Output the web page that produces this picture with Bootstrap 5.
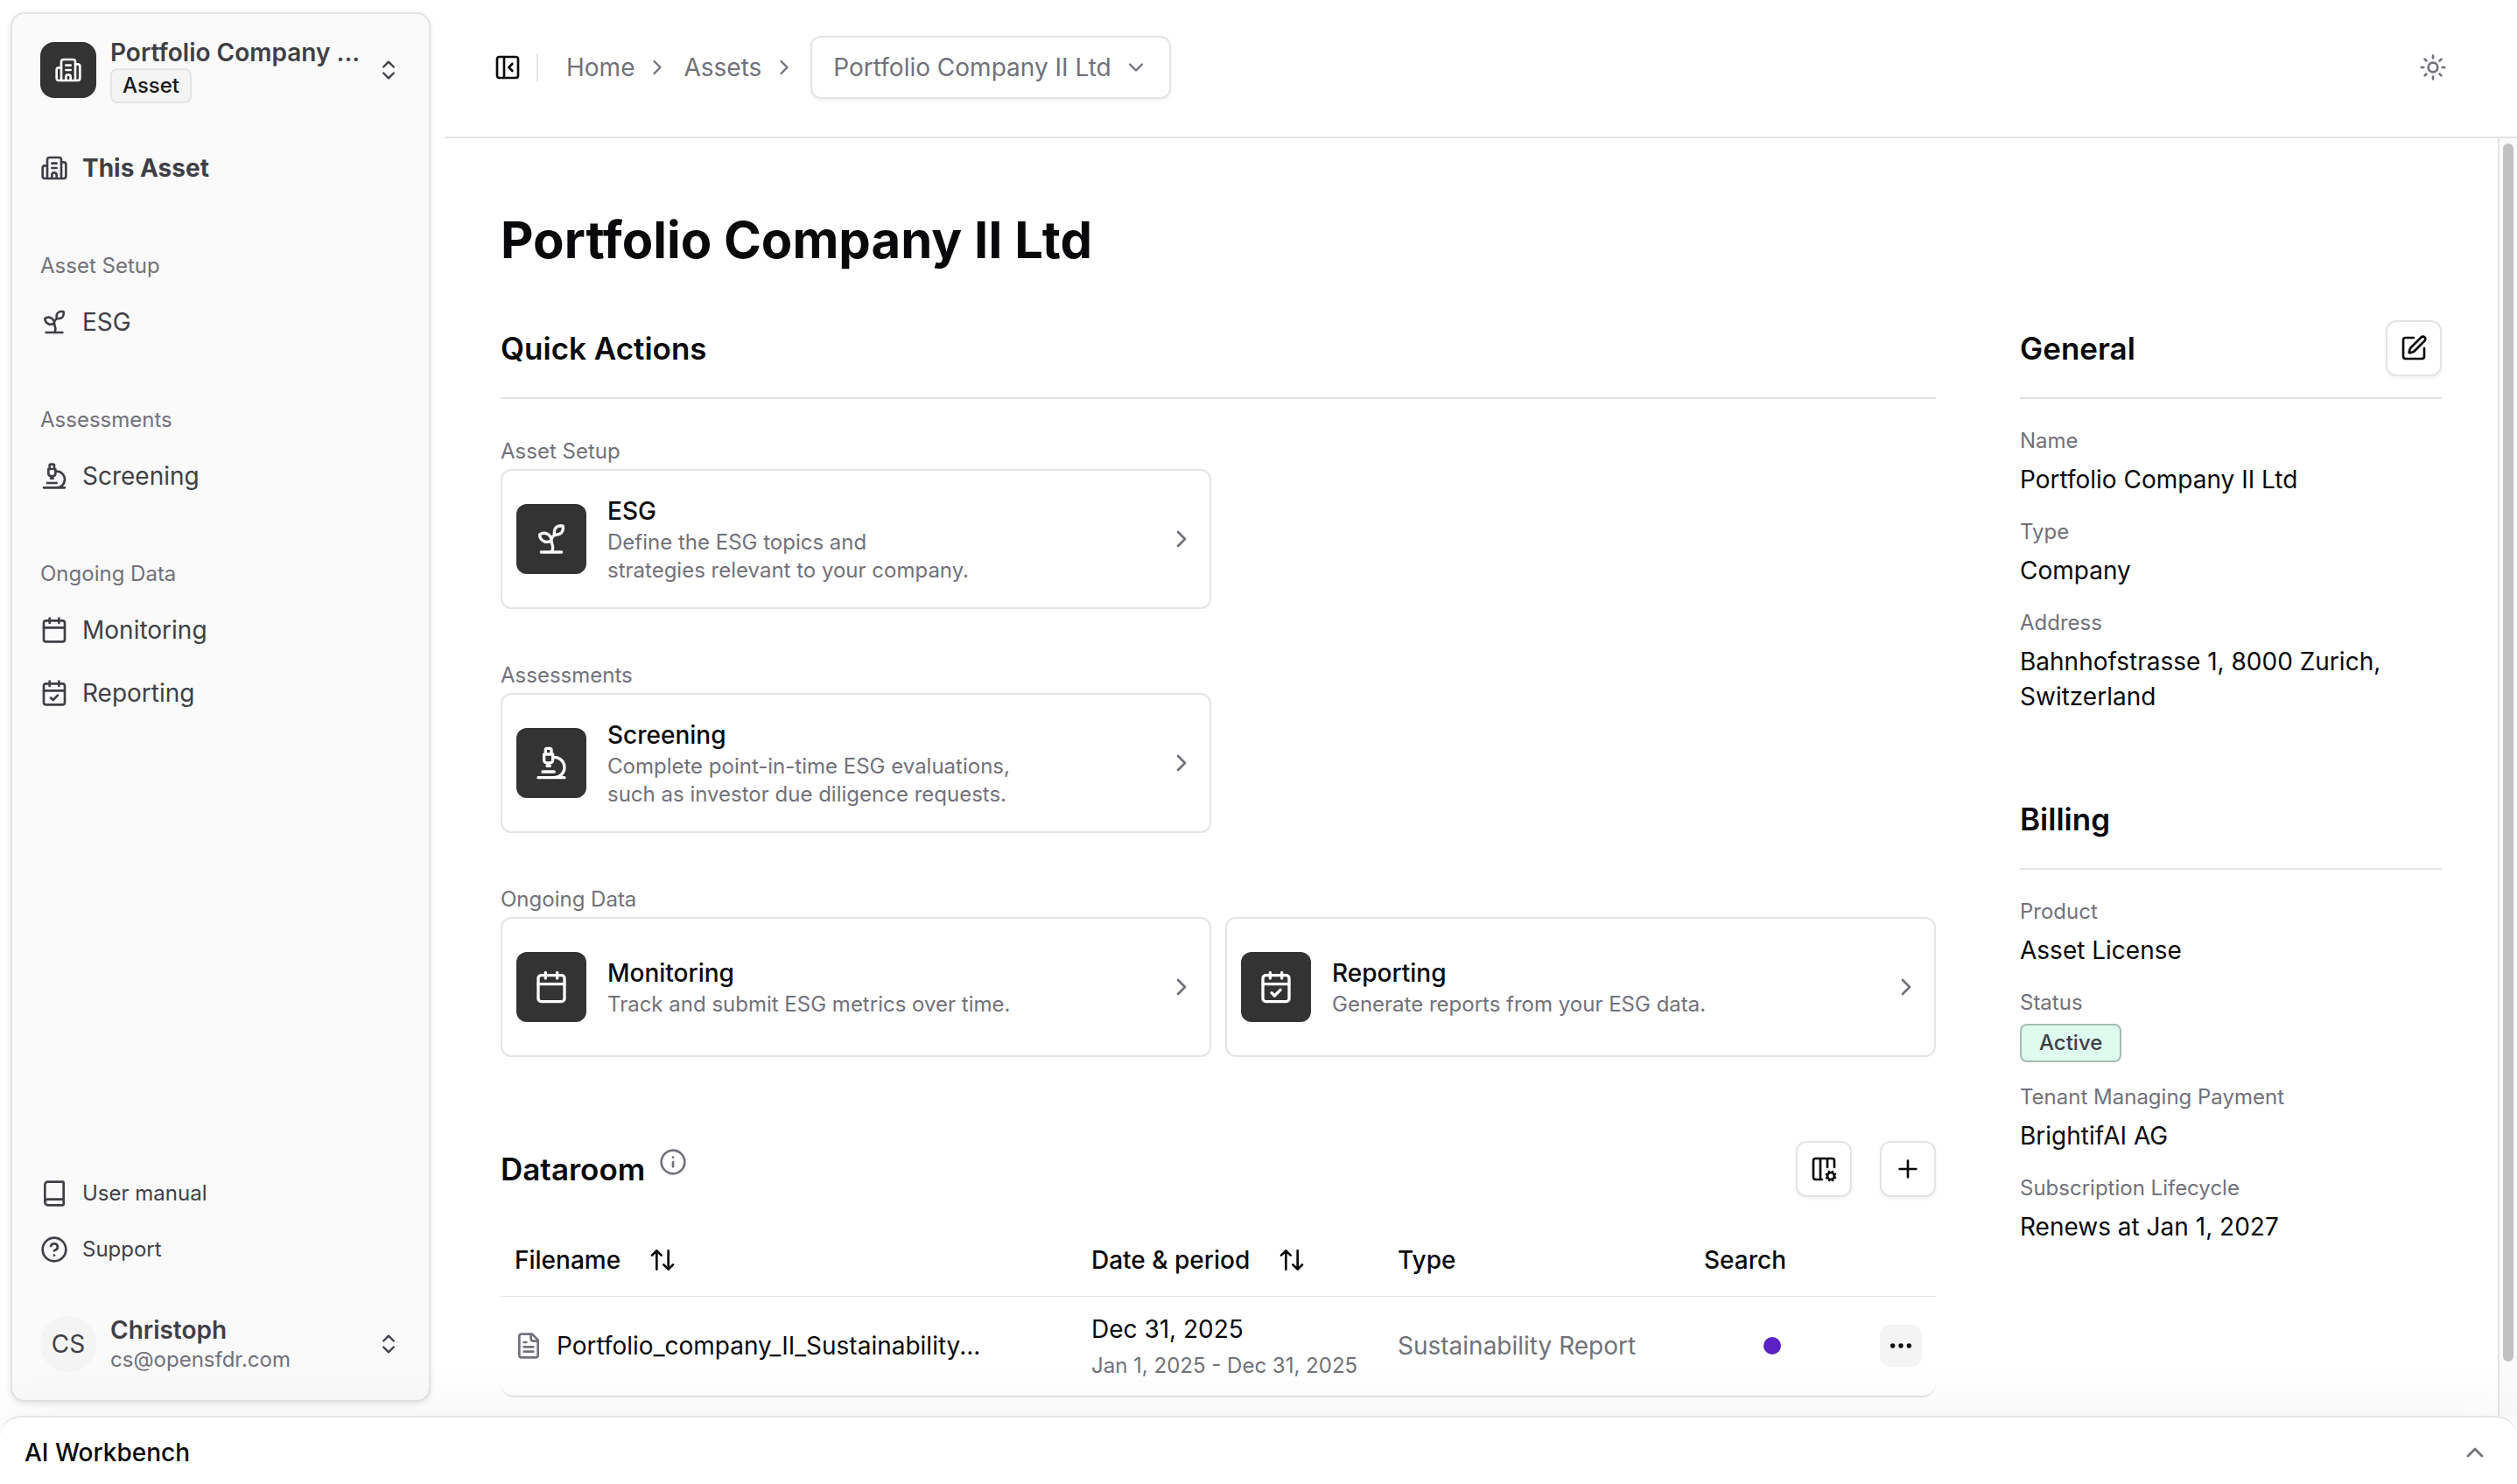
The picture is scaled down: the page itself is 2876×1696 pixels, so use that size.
<!DOCTYPE html>
<html lang="en">
<head>
<meta charset="utf-8">
<meta name="viewport" content="width=device-width, initial-scale=1">
<title>Portfolio Company II Ltd</title>
<link href="https://cdn.jsdelivr.net/npm/bootstrap@5.3.0/dist/css/bootstrap.min.css" rel="stylesheet">
<style>
:root{--line:#e4e4e7;--ink:#09090b;--muted:#71717a;--side:#3f3f46;--tile:#333}
body{font-family:Inter,"Liberation Sans",sans-serif;font-size:28px;line-height:40px;color:var(--ink);background:#fff}
a{color:inherit;text-decoration:none}
button{font:inherit;color:inherit;background:none;border:0;padding:0}
.ico{width:32px;height:32px;flex:none;fill:none;stroke:currentColor;stroke-width:2;stroke-linecap:round;stroke-linejoin:round}
.ico-sm{width:28px;height:28px}
.ico-lg{width:40px;height:40px}
.txt-s{font-size:24px;line-height:32px}
.muted{color:var(--muted)}
.soft-shadow{box-shadow:0 2px 4px rgba(0,0,0,.06)}
/* sidebar */
.side-wrap{padding:14px 16px 16px 12px}
.sidebar{width:480px;background:#fafafa;border:2px solid var(--line);border-radius:16px;color:var(--side);padding:16px;box-shadow:0 2px 6px rgba(0,0,0,.1)}
.switcher{height:96px;padding:0 16px;gap:16px;text-align:left;width:100%}
.logo-tile{width:64px;height:64px;border-radius:16px;background:var(--tile);color:#fff}
.avatar{width:64px;height:64px;border-radius:50%;background:#f4f4f5}
.switcher .name{font-weight:600;line-height:36px}
.kind{font-size:24px;line-height:36px;font-weight:500;color:#18181b;background:#f4f4f5;border:2px solid var(--line);border-radius:8px;padding:0 12px}
.side-link{height:64px;padding:0 16px;gap:16px}
.side-foot .side-link{height:56px;font-size:24px}
.side-label{height:64px;line-height:64px;font-size:24px;padding:0 16px;color:var(--muted)}
.side-group{margin-top:48px}
/* header */
.topbar{height:158px;border-bottom:2px solid var(--line);padding:0 80px 2px 56px}
.rule-v{width:2px;height:32px;background:var(--line);margin:0 32px 0 17px}
.crumbs{gap:12px;color:var(--muted)}
.crumbs > svg{margin-right:4px}
.crumb-select{height:72px;border:2px solid var(--line);border-radius:12px;padding:0 24px;gap:14px}
/* content */
.page-body{padding:76px 64px 0}
.page-cols{gap:96px}
h1.page-title{font-size:58px;line-height:80px;font-weight:700;margin:0 0 52px}
.sec-head{height:64px}
.sec-head h2{font-size:35px;line-height:48px;font-weight:600;margin:0}
.ruled{height:90px;padding-bottom:24px;border-bottom:2px solid var(--line)}
.actions{padding-top:44px}
.action-group{margin-bottom:60px}
.action-label{margin-bottom:4px}
.action-grid{display:grid;grid-template-columns:1fr 1fr;gap:16px}
.action{height:160px;border:2px solid var(--line);border-radius:12px;padding:0 16px;gap:24px}
.action .t{font-weight:500}
.action-tile{width:80px;height:80px;border-radius:12px;background:var(--tile);color:#fff}
.sq-btn{width:64px;height:64px;border:2px solid var(--line);border-radius:12px}
.room{margin-top:96px}
.room-head{margin-bottom:32px}
.room-tools{gap:32px}
.room-table{border-bottom:2px solid var(--line);border-radius:16px}
.room-table table{width:100%;table-layout:fixed;margin:0}
.room-table th{font-weight:500;height:81px;padding:0 16px;border-bottom:1px solid var(--line)}
.sortable{gap:32px}
.room-table td{height:114px;padding:0 16px}
.period{margin-top:6px}
.dot{width:20px;height:20px;border-radius:50%;background:#5b21c4}
.more{width:48px;height:48px;border-radius:12px;background:#f4f4f5}
.info-col{width:482px}
.facts{margin:32px 0 0}
.facts dt{font-weight:400;font-size:24px;line-height:32px;color:var(--muted);margin-bottom:8px}
.facts dd{margin:0 0 24px}
.billing{margin-top:88px}
.state{font-size:24px;line-height:40px;font-weight:500;color:var(--side);background:#dffaee;border:2px solid #a5bdb3;border-radius:8px;padding:0 20px}
.scroll-track{width:22px;border-left:2px solid var(--line);background:#fafafa;padding:6px 4px 60px}
.scroll-thumb{width:12px;height:1392px;max-height:100%;border-radius:6px;background:#c1c1c1}
.workbench{height:78px;border-top:2px solid var(--line);border-radius:24px 24px 0 0;background:#fff;padding:4px 32px 0 28px;font-weight:500;box-shadow:0 -16px 60px rgba(0,0,0,.04);z-index:2}
</style>
<script src="https://cdn.jsdelivr.net/npm/bootstrap@5.3.0/dist/js/bootstrap.bundle.min.js"></script>
</head>
<body class="vh-100 d-flex flex-column overflow-hidden">
<svg class="d-none" aria-hidden="true">
<symbol id="building" viewBox="0 0 24 24"><path d="M10 12h4M10 8h4M14 21v-3a2 2 0 0 0-4 0v3M6 10H4a2 2 0 0 0-2 2v7a2 2 0 0 0 2 2h16a2 2 0 0 0 2-2V9a2 2 0 0 0-2-2h-2M6 21V5a2 2 0 0 1 2-2h8a2 2 0 0 1 2 2v16"/></symbol>
<symbol id="sprout" viewBox="0 0 24 24"><path d="M14 9.536V7a4 4 0 0 1 4-4h1.5a.5.5 0 0 1 .5.5V5a4 4 0 0 1-4 4 4 4 0 0 0-4 4c0 2 1 3 1 5a5 5 0 0 1-1 3M4 9a5 5 0 0 1 8 4 5 5 0 0 1-8-4M5 21h14"/></symbol>
<symbol id="scope" viewBox="0 0 24 24"><path d="M6 18h8M3 22h18M14 22a7 7 0 1 0 0-14h-1M9 14h2M9 12a2 2 0 0 1-2-2V6h6v4a2 2 0 0 1-2 2ZM12 6V3a1 1 0 0 0-1-1H9a1 1 0 0 0-1 1v3"/></symbol>
<symbol id="cal" viewBox="0 0 24 24"><path d="M8 2v4M16 2v4M3 10h18"/><rect x="3" y="4" width="18" height="18" rx="2"/></symbol>
<symbol id="calcheck" viewBox="0 0 24 24"><path d="M8 2v4M16 2v4M3 10h18M9 16l2 2 4-4"/><rect x="3" y="4" width="18" height="18" rx="2"/></symbol>
<symbol id="book" viewBox="0 0 24 24"><path d="M4 19.5v-15A2.5 2.5 0 0 1 6.5 2H19a1 1 0 0 1 1 1v18a1 1 0 0 1-1 1H6.5a1 1 0 0 1 0-5H20"/></symbol>
<symbol id="help" viewBox="0 0 24 24"><circle cx="12" cy="12" r="10"/><path d="M9.09 9a3 3 0 0 1 5.83 1c0 2-3 3-3 3M12 17h.01"/></symbol>
<symbol id="updown" viewBox="0 0 24 24"><path d="m7 15 5 5 5-5M7 9l5-5 5 5"/></symbol>
<symbol id="panel" viewBox="0 0 24 24"><rect x="3" y="3" width="18" height="18" rx="2"/><path d="M9 3v18M16 15l-3-3 3-3"/></symbol>
<symbol id="right" viewBox="0 0 24 24"><path d="m9 18 6-6-6-6"/></symbol>
<symbol id="down" viewBox="0 0 24 24"><path d="m6 9 6 6 6-6"/></symbol>
<symbol id="up" viewBox="0 0 24 24"><path d="m18 15-6-6-6 6"/></symbol>
<symbol id="sun" viewBox="0 0 24 24"><circle cx="12" cy="12" r="4"/><path d="M12 2v2M12 20v2M4.93 4.93l1.41 1.41M17.66 17.66l1.41 1.41M2 12h2M20 12h2M6.34 17.66l-1.41 1.41M19.07 4.93l-1.41 1.41"/></symbol>
<symbol id="pen" viewBox="0 0 24 24"><path d="M12 3H5a2 2 0 0 0-2 2v14a2 2 0 0 0 2 2h14a2 2 0 0 0 2-2v-7M18.375 2.625a1 1 0 0 1 3 3l-9.013 9.014a2 2 0 0 1-.853.505l-2.873.84a.5.5 0 0 1-.62-.62l.84-2.873a2 2 0 0 1 .506-.852z"/></symbol>
<symbol id="info" viewBox="0 0 24 24"><circle cx="12" cy="12" r="10"/><path d="M12 16v-4M12 8h.01"/></symbol>
<symbol id="cols" viewBox="0 0 24 24"><path d="M10.5 21H5a2 2 0 0 1-2-2V5a2 2 0 0 1 2-2h14a2 2 0 0 1 2 2v5.5M14.3 19.6l1-.4M15 3v7.5M15.2 16.9l-.9-.3M16.6 21.7l.3-.9M16.8 15.3l-.4-1M19.1 15.2l.3-.9M19.6 21.7l-.4-1M20.7 16.8l1-.4M21.7 19.4l-.9-.3M9 3v18"/><circle cx="18" cy="18" r="3"/></symbol>
<symbol id="plus" viewBox="0 0 24 24"><path d="M5 12h14M12 5v14"/></symbol>
<symbol id="sort" viewBox="0 0 24 24"><path d="m21 16-4 4-4-4M17 20V4M3 8l4-4 4 4M7 4v16"/></symbol>
<symbol id="file" viewBox="0 0 24 24"><path d="M15 2H6a2 2 0 0 0-2 2v16a2 2 0 0 0 2 2h12a2 2 0 0 0 2-2V7ZM14 2v4a2 2 0 0 0 2 2h4M10 9H8M16 13H8M16 17H8"/></symbol>
<symbol id="dots" viewBox="0 0 24 24"><g fill="currentColor"><circle cx="12" cy="12" r="1"/><circle cx="19" cy="12" r="1"/><circle cx="5" cy="12" r="1"/></g></symbol>
</svg>

<div class="d-flex flex-grow-1 overflow-hidden">
  <div class="side-wrap d-flex">
    <aside class="sidebar d-flex flex-column">
      <button class="switcher d-flex align-items-center" type="button">
        <span class="logo-tile d-flex align-items-center justify-content-center flex-shrink-0"><svg class="ico"><use href="#building"/></svg></span>
        <span class="flex-grow-1 d-flex flex-column align-items-start">
          <span class="name text-nowrap">Portfolio Company ...</span>
          <span class="kind">Asset</span>
        </span>
        <svg class="ico ico-sm"><use href="#updown"/></svg>
      </button>
      <nav class="flex-grow-1 mt-3 pt-3">
        <a href="#" class="side-link d-flex align-items-center fw-bold"><svg class="ico"><use href="#building"/></svg>This Asset</a>
        <div class="side-group">
          <div class="side-label">Asset Setup</div>
          <a href="#" class="side-link d-flex align-items-center"><svg class="ico"><use href="#sprout"/></svg>ESG</a>
        </div>
        <div class="side-group">
          <div class="side-label">Assessments</div>
          <a href="#" class="side-link d-flex align-items-center"><svg class="ico"><use href="#scope"/></svg>Screening</a>
        </div>
        <div class="side-group">
          <div class="side-label">Ongoing Data</div>
          <a href="#" class="side-link d-flex align-items-center mb-2"><svg class="ico"><use href="#cal"/></svg>Monitoring</a>
          <a href="#" class="side-link d-flex align-items-center"><svg class="ico"><use href="#calcheck"/></svg>Reporting</a>
        </div>
      </nav>
      <div class="side-foot">
        <a href="#" class="side-link d-flex align-items-center mb-2"><svg class="ico"><use href="#book"/></svg>User manual</a>
        <a href="#" class="side-link d-flex align-items-center mb-3"><svg class="ico"><use href="#help"/></svg>Support</a>
      </div>
      <button class="switcher d-flex align-items-center mt-3" type="button">
        <span class="avatar d-flex align-items-center justify-content-center flex-shrink-0">CS</span>
        <span class="flex-grow-1 d-flex flex-column">
          <span class="name">Christoph</span>
          <span class="txt-s muted">cs@opensfdr.com</span>
        </span>
        <svg class="ico ico-sm"><use href="#updown"/></svg>
      </button>
    </aside>
  </div>

  <div class="flex-grow-1 d-flex flex-column overflow-hidden">
    <header class="topbar d-flex align-items-center flex-shrink-0">
      <button type="button" class="d-flex" aria-label="Toggle sidebar"><svg class="ico"><use href="#panel"/></svg></button>
      <div class="rule-v"></div>
      <nav class="crumbs d-flex align-items-center flex-grow-1" aria-label="Breadcrumb">
        <a href="#">Home</a>
        <svg class="ico ico-sm"><use href="#right"/></svg>
        <a href="#">Assets</a>
        <svg class="ico ico-sm"><use href="#right"/></svg>
        <button type="button" class="crumb-select soft-shadow d-flex align-items-center">Portfolio Company II Ltd<svg class="ico ico-sm"><use href="#down"/></svg></button>
      </nav>
      <button type="button" class="d-flex muted" aria-label="Theme"><svg class="ico"><use href="#sun"/></svg></button>
    </header>

    <div class="d-flex flex-grow-1 overflow-hidden">
      <main class="page-body flex-grow-1 overflow-hidden">
        <h1 class="page-title">Portfolio Company II Ltd</h1>
        <div class="page-cols d-flex">
          <div class="flex-grow-1">
            <div class="ruled"><div class="sec-head d-flex align-items-center"><h2>Quick Actions</h2></div></div>
            <div class="actions">
            <section class="action-group">
              <div class="action-label txt-s muted">Asset Setup</div>
              <div class="action-grid">
                <a href="#" class="action d-flex align-items-center">
                  <span class="action-tile d-flex align-items-center justify-content-center"><svg class="ico ico-lg"><use href="#sprout"/></svg></span>
                  <span class="flex-grow-1"><span class="t d-block">ESG</span><span class="txt-s muted d-block">Define the ESG topics and<br>strategies relevant to your company.</span></span>
                  <svg class="ico muted"><use href="#right"/></svg>
                </a>
              </div>
            </section>
            <section class="action-group">
              <div class="action-label txt-s muted">Assessments</div>
              <div class="action-grid">
                <a href="#" class="action d-flex align-items-center">
                  <span class="action-tile d-flex align-items-center justify-content-center"><svg class="ico ico-lg"><use href="#scope"/></svg></span>
                  <span class="flex-grow-1"><span class="t d-block">Screening</span><span class="txt-s muted d-block">Complete point-in-time ESG evaluations,<br>such as investor due diligence requests.</span></span>
                  <svg class="ico muted"><use href="#right"/></svg>
                </a>
              </div>
            </section>
            <section class="action-group">
              <div class="action-label txt-s muted">Ongoing Data</div>
              <div class="action-grid">
                <a href="#" class="action d-flex align-items-center">
                  <span class="action-tile d-flex align-items-center justify-content-center"><svg class="ico ico-lg"><use href="#cal"/></svg></span>
                  <span class="flex-grow-1"><span class="t d-block">Monitoring</span><span class="txt-s muted d-block">Track and submit ESG metrics over time.</span></span>
                  <svg class="ico muted"><use href="#right"/></svg>
                </a>
                <a href="#" class="action d-flex align-items-center">
                  <span class="action-tile d-flex align-items-center justify-content-center"><svg class="ico ico-lg"><use href="#calcheck"/></svg></span>
                  <span class="flex-grow-1"><span class="t d-block">Reporting</span><span class="txt-s muted d-block">Generate reports from your ESG data.</span></span>
                  <svg class="ico muted"><use href="#right"/></svg>
                </a>
              </div>
            </section>
            </div>
            <section class="room">
              <div class="sec-head room-head d-flex align-items-center">
                <h2 class="me-3">Dataroom</h2>
                <svg class="ico muted mb-3"><use href="#info"/></svg>
                <div class="room-tools d-flex ms-auto">
                  <button type="button" class="sq-btn soft-shadow d-flex align-items-center justify-content-center" aria-label="Columns"><svg class="ico"><use href="#cols"/></svg></button>
                  <button type="button" class="sq-btn soft-shadow d-flex align-items-center justify-content-center" aria-label="Add"><svg class="ico"><use href="#plus"/></svg></button>
                </div>
              </div>
              <div class="room-table">
                <table>
                  <colgroup><col><col style="width:350px"><col style="width:350px"><col style="width:188px"><col style="width:93px"></colgroup>
                  <thead><tr>
                    <th scope="col"><button type="button" class="sortable d-flex align-items-center">Filename<svg class="ico"><use href="#sort"/></svg></button></th>
                    <th scope="col"><button type="button" class="sortable d-flex align-items-center text-nowrap">Date &amp; period<svg class="ico"><use href="#sort"/></svg></button></th>
                    <th scope="col">Type</th><th scope="col">Search</th><th></th>
                  </tr></thead>
                  <tbody><tr>
                    <td><div class="d-flex align-items-center" style="gap:16px"><svg class="ico muted"><use href="#file"/></svg>Portfolio_company_II_Sustainability...</div></td>
                    <td>Dec 31, 2025<div class="period txt-s muted text-nowrap">Jan 1, 2025 - Dec 31, 2025</div></td>
                    <td class="muted">Sustainability Report</td>
                    <td><div class="dot mx-auto"></div></td>
                    <td><button type="button" class="more d-flex align-items-center justify-content-center ms-auto" aria-label="More"><svg class="ico"><use href="#dots"/></svg></button></td>
                  </tr></tbody>
                </table>
              </div>
            </section>
          </div>

          <aside class="info-col flex-shrink-0">
            <div class="ruled"><div class="sec-head d-flex align-items-center justify-content-between"><h2>General</h2>
              <button type="button" class="sq-btn soft-shadow d-flex align-items-center justify-content-center" aria-label="Edit"><svg class="ico"><use href="#pen"/></svg></button></div></div>
            <dl class="facts">
              <dt>Name</dt><dd>Portfolio Company II Ltd</dd>
              <dt>Type</dt><dd>Company</dd>
              <dt>Address</dt><dd class="mb-0">Bahnhofstrasse 1, 8000 Zurich, Switzerland</dd>
            </dl>
            <div class="ruled billing"><div class="sec-head d-flex align-items-center"><h2>Billing</h2></div></div>
            <dl class="facts">
              <dt>Product</dt><dd>Asset License</dd>
              <dt>Status</dt><dd class="d-flex"><span class="state">Active</span></dd>
              <dt>Tenant Managing Payment</dt><dd>BrightifAI AG</dd>
              <dt>Subscription Lifecycle</dt><dd>Renews at Jan 1, 2027</dd>
            </dl>
          </aside>
        </div>
      </main>
      <div class="scroll-track flex-shrink-0"><div class="scroll-thumb"></div></div>
    </div>
  </div>
</div>

<footer class="workbench d-flex align-items-center justify-content-between flex-shrink-0 position-relative">
  <span>AI Workbench</span>
  <button type="button" class="d-flex muted" aria-label="Expand"><svg class="ico"><use href="#up"/></svg></button>
</footer>
</body>
</html>
